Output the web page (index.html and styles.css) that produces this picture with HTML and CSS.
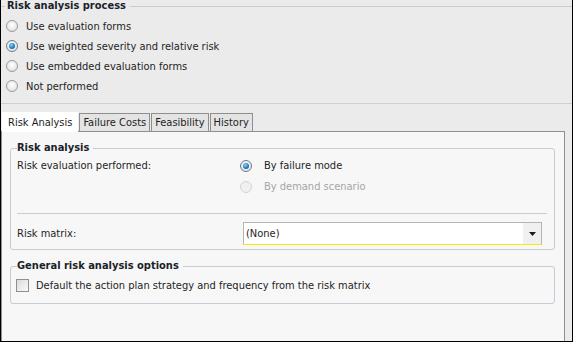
FILE: index.html
```html
<!DOCTYPE html>
<html>
<head>
<meta charset="utf-8">
<link rel="stylesheet" href="styles.css">
</head>
<body>
<div class="window">
  <div class="process">
    <div class="pgroup">
      <div class="ptitle"><span>Risk analysis process</span></div>
      <div class="radios">
        <label class="radio"><span class="rb"></span>Use evaluation forms</label>
        <label class="radio"><span class="rb on"></span>Use weighted severity and relative risk</label>
        <label class="radio"><span class="rb"></span>Use embedded evaluation forms</label>
        <label class="radio"><span class="rb"></span>Not performed</label>
      </div>
    </div>
  </div>
  <div class="tabs">
    <div class="tab sel">Risk Analysis</div>
    <div class="tab">Failure Costs</div>
    <div class="tab">Feasibility</div>
    <div class="tab">History</div>
  </div>
  <div class="panel">
    <div class="group g1">
      <div class="gtitle"><span>Risk analysis</span></div>
      <div class="row eval">
        <div class="lbl">Risk evaluation performed:</div>
        <div class="opts">
          <label class="radio r21"><span class="rb on"></span>By failure mode</label>
          <label class="radio r21 dis"><span class="rb"></span>By demand scenario</label>
        </div>
      </div>
      <div class="sep"></div>
      <div class="row matrix">
        <div class="lbl">Risk matrix:</div>
        <div class="combo"><span class="cval">(None)</span><span class="cbtn"><svg width="7" height="4" viewBox="0 0 7 4"><path d="M0 0h7L3.5 4z" fill="#1a1a1a"/></svg></span></div>
      </div>
    </div>
    <div class="group g2">
      <div class="gtitle"><span>General risk analysis options</span></div>
      <label class="check"><span class="cb"></span>Default the action plan strategy and frequency from the risk matrix</label>
    </div>
  </div>
</div>
</body>
</html>
```

FILE: styles.css
```css
html, body { margin: 0; padding: 0; }
body { font-family: "DejaVu Sans Condensed", "DejaVu Sans", sans-serif; font-size: 11px; color: #1e1e1e; }
.window {
  width: 573px; height: 342px; box-sizing: border-box;
  border-left: 1px solid #000; border-right: 1px solid #000; border-bottom: 1px solid #000;
  background: #ebebeb; display: flex; flex-direction: column; overflow: hidden;
}
.process { height: 104px; border-bottom: 1px solid #ccd0d4; box-sizing: border-box; flex: none; }
.pgroup { margin: 6px -2px 0 -2px; border-top: 1px solid #c9ccd0; }
.ptitle { margin-top: -8px; padding-left: 6px; height: 14px; }
.ptitle span, .gtitle span { background: #ebebeb; font-weight: bold; font-size: 11px; padding: 0 4px 0 2px; line-height: 14px; color: #1a1f2a; }
.radios { display: flex; flex-direction: column; padding: 3px 0 0 7px; }
.radio { display: flex; align-items: center; height: 20px; gap: 8px; }
.radio.r21 { height: 21px; gap: 12px; }
.rb {
  width: 12px; height: 12px; border-radius: 50%; box-sizing: border-box;
  border: 1px solid #9a9a9a; background: radial-gradient(circle at 50% 40%, #fff 0, #e6e6e6 70%, #d8d8d8 100%);
  flex: none; position: relative;
}
.rb.on { border-color: #6f7a86; }
.rb.on::after {
  content: ""; position: absolute; left: 2px; top: 2px; width: 6px; height: 6px; border-radius: 50%;
  background: radial-gradient(circle at 40% 35%, #8ad6ff 0, #1d7fc7 55%, #0b3f78 100%);
}
.radio.dis { color: #a5a5a5; }
.radio.dis .rb { border-color: #d4d4d4; background: #f0f0f0; }

.tabs { display: flex; align-items: flex-end; height: 27px; padding-left: 1px; flex: none; }
.tab {
  height: 18px; line-height: 17px; padding: 0 3px; box-sizing: border-box; margin-left: 1px;
  border: 1px solid #8e8e8e; border-bottom: none; background: #e4e4e4; font-size: 11px;
}
.tab.sel { height: 20px; line-height: 19px; background: #fff; border-color: #fff; margin-left: 0; margin-bottom: -1px; position: relative; z-index: 1; padding: 0 5px; }
.panel {
  flex: 1; background: #f7f7f7; border: 1px solid #8e8f8f; border-bottom: none; margin-right: 7px;
  padding: 16px 9px 0 8px; display: flex; flex-direction: column; gap: 16px;
}
.group { border: 1px solid #c5ccd3; border-radius: 3px; padding: 0 6px; }
.gtitle { margin-top: -8px; height: 14px; }
.gtitle span { background: #f7f7f7; padding: 0 4px 0 0; }
.g1 { height: 102px; box-sizing: border-box; flex: none; }
.row { display: flex; }
.lbl { width: 223px; flex: none; }
.eval { margin-top: 0; }
.eval .lbl { line-height: 21px; }
.sep { height: 1px; background: #c9cdd1; margin: 16px 1px 0 0; }
.matrix { align-items: center; margin-top: 8px; }
.combo {
  width: 299px; height: 23px; margin-left: 3px; box-sizing: border-box; border: 1px solid #b4b4b4; background: #fff;
  display: flex; border-bottom: 1px solid #f0f000;
}
.cval { flex: 1; padding-left: 2px; line-height: 21px; }
.cbtn { width: 18px; background: #f0f0f0; display: flex; align-items: center; justify-content: center; }
.g2 { height: 38px; box-sizing: border-box; flex: none; }
.check { display: flex; align-items: center; gap: 7px; margin: 6px 0 0 -1px; }
.cb { width: 13px; height: 13px; box-sizing: border-box; border: 1px solid #8f8f8f; background: linear-gradient(135deg, #dcdcdc, #fafafa); flex: none; }
```
